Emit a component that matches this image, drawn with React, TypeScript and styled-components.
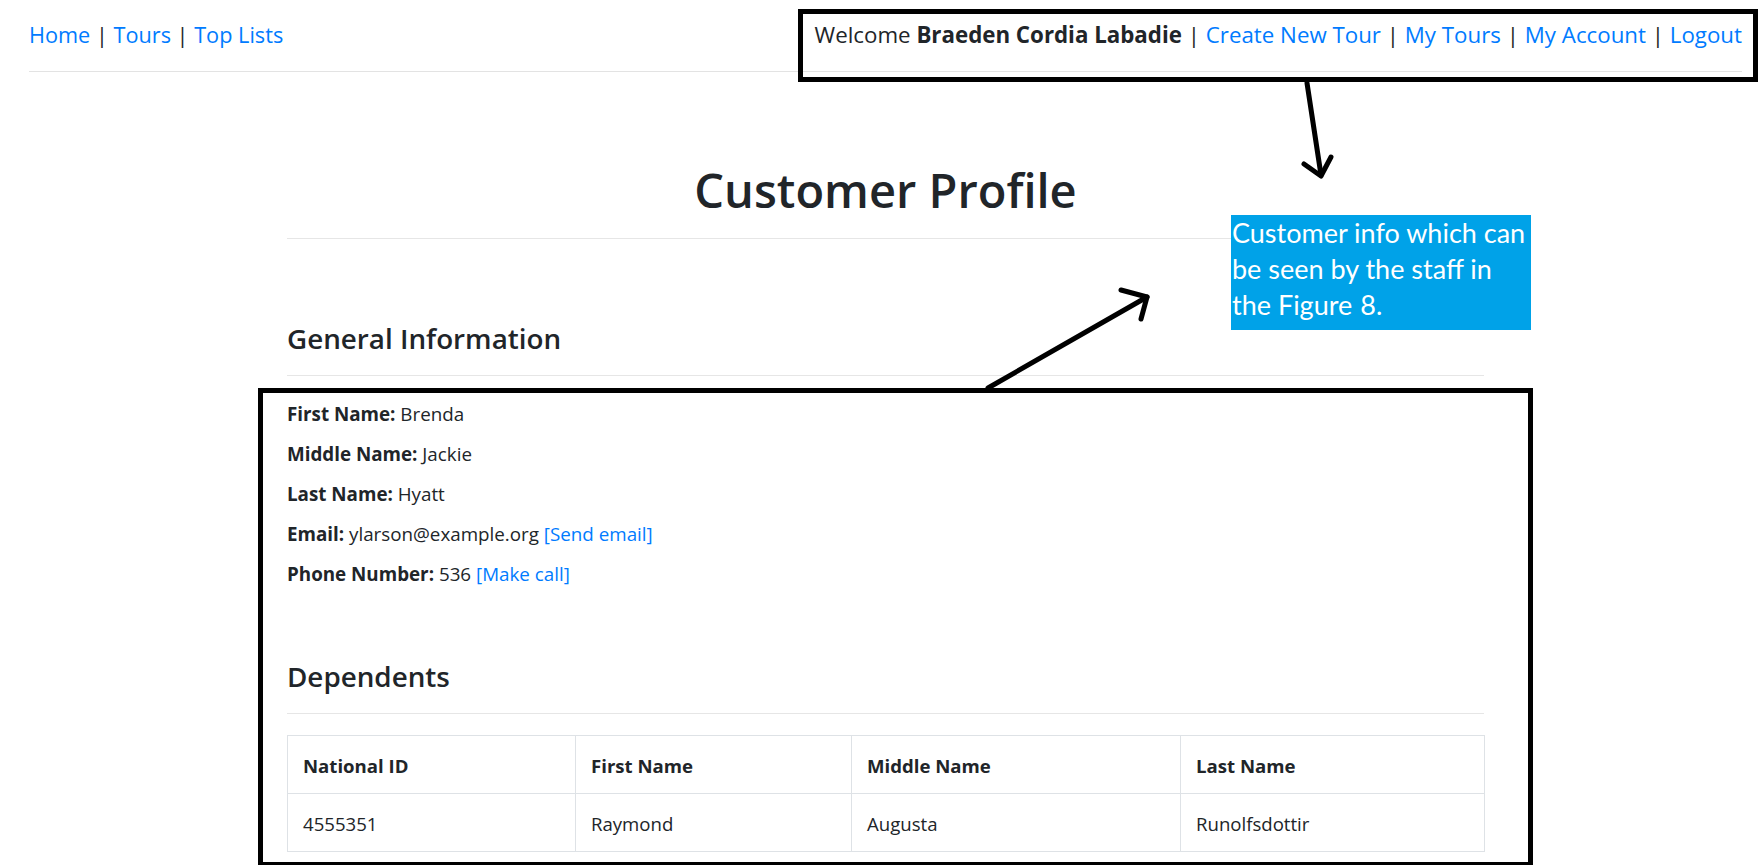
import React from "react";
import styled, { createGlobalStyle } from "styled-components";

const GlobalStyle = createGlobalStyle`
  html, body { margin: 0; padding: 0; background: #ffffff; }
  body {
    font-family: "Open Sans", "Noto Sans", sans-serif;
    color: #212529;
  }
  * { box-sizing: border-box; }
`;

const Page = styled.div`
  position: relative;
  width: 1760px;
  height: 865px;
  overflow: hidden;
`;

const Header = styled.header`
  display: flex;
  justify-content: space-between;
  align-items: center;
  margin: 0 18px 0 29px;
  padding: 17px 0 18px;
  border-bottom: 1px solid #e3e3e3;
  line-height: 36px;
  white-space: pre;
`;

const NavGroup = styled.nav<{ $size: number }>`
  display: block;
  font-size: ${(p) => p.$size}px;
`;

const NavLink = styled.a`
  color: #007bff;
  text-decoration: none;
`;

const Strong = styled.b`
  font-weight: 700;
`;

const Main = styled.main`
  width: 1197px;
  margin-left: 287px;
  padding-top: 88px;
`;

const Title = styled.h1`
  margin: 0;
  font-size: 47px;
  font-weight: 600;
  line-height: 60px;
  text-align: center;
  padding-bottom: 18px;
  border-bottom: 1px solid #e6e6e6;
`;

const SectionTitle = styled.h4<{ $gap: number }>`
  margin: ${(p) => p.$gap}px 0 0;
  font-size: 27.8px;
  font-weight: 600;
  line-height: 36px;
  padding-bottom: 19px;
  border-bottom: 1px solid #e6e6e6;
`;

const InfoList = styled.div`
  display: flex;
  flex-direction: column;
  gap: 10px;
  margin-top: 23px;
  margin-bottom: -2px;
  font-size: 18.8px;
  line-height: 30px;
`;

const InfoRow = styled.p`
  margin: 0;
  white-space: pre;
`;

const Label = styled.b`
  font-weight: 700;
`;

const ActionLink = styled.a`
  color: #007bff;
  text-decoration: none;
`;

const Table = styled.table`
  width: 1197px;
  margin-top: 21px;
  border-collapse: collapse;
  table-layout: fixed;
  font-size: 18.6px;
  line-height: 29px;
`;

const Th = styled.th`
  text-align: left;
  font-weight: 700;
  padding: 15px 15px 13px;
  border: 1px solid #dee2e6;
`;

const Td = styled.td`
  padding: 15px 15px 13px;
  border: 1px solid #dee2e6;
`;

const Overlay = styled.svg`
  position: absolute;
  left: 0;
  top: 0;
  pointer-events: none;
`;

const Callout = styled.div`
  position: absolute;
  left: 1231px;
  top: 215px;
  width: 300px;
  height: 115px;
  background: #00a2e8;
  color: #ffffff;
  font-family: "Lato", "Open Sans", sans-serif;
  font-size: 27px;
  line-height: 36px;
  padding: 0 0 0 1px;
  white-space: nowrap;
`;

const Figure = styled.span`
  margin-left: 8px;
`;

const columns = [288, 276, 329, 304];

const dependents = [
  { id: "4555351", first: "Raymond", middle: "Augusta", last: "Runolfsdottir" },
];

export default function App() {
  return (
    <Page>
      <GlobalStyle />
      <Header>
        <NavGroup $size={21.7}>
          <NavLink href="#">Home</NavLink>
          {" | "}
          <NavLink href="#">Tours</NavLink>
          {" | "}
          <NavLink href="#">Top Lists</NavLink>
        </NavGroup>
        <NavGroup $size={22.3}>
          {"Welcome "}
          <Strong>Braeden Cordia Labadie</Strong>
          {" | "}
          <NavLink href="#">Create New Tour</NavLink>
          {" | "}
          <NavLink href="#">My Tours</NavLink>
          {" | "}
          <NavLink href="#">My Account</NavLink>
          {" | "}
          <NavLink href="#">Logout</NavLink>
        </NavGroup>
      </Header>

      <Main>
        <Title>Customer Profile</Title>

        <SectionTitle $gap={81}>General Information</SectionTitle>
        <InfoList>
          <InfoRow>
            <Label>First Name:</Label> Brenda
          </InfoRow>
          <InfoRow>
            <Label>Middle Name:</Label> Jackie
          </InfoRow>
          <InfoRow>
            <Label>Last Name:</Label> Hyatt
          </InfoRow>
          <InfoRow>
            <Label>Email:</Label> ylarson@example.org{" "}
            <ActionLink href="#">[Send email]</ActionLink>
          </InfoRow>
          <InfoRow>
            <Label>Phone Number:</Label> 536{" "}
            <ActionLink href="#">[Make call]</ActionLink>
          </InfoRow>
        </InfoList>

        <SectionTitle $gap={71}>Dependents</SectionTitle>
        <Table>
          <colgroup>
            {columns.map((w, i) => (
              <col key={i} style={{ width: w }} />
            ))}
          </colgroup>
          <thead>
            <tr>
              <Th>National ID</Th>
              <Th>First Name</Th>
              <Th>Middle Name</Th>
              <Th>Last Name</Th>
            </tr>
          </thead>
          <tbody>
            {dependents.map((d) => (
              <tr key={d.id}>
                <Td>{d.id}</Td>
                <Td>{d.first}</Td>
                <Td>{d.middle}</Td>
                <Td>{d.last}</Td>
              </tr>
            ))}
          </tbody>
        </Table>
      </Main>

      <Overlay width="1760" height="865" viewBox="0 0 1760 865">
        <g fill="none" stroke="#000" strokeWidth="5">
          <rect x="800.5" y="11.5" width="955" height="68" />
          <rect x="260.5" y="390.5" width="1270" height="474" />
        </g>
        <g fill="none" stroke="#000" strokeWidth="5" strokeLinecap="round" strokeLinejoin="round">
          <path d="M1307 83 L1321 175" />
          <path d="M1304 164 L1321 176 L1331 157" />
          <path d="M988 388 L1147 297" />
          <path d="M1121 290 L1147 297 L1141 319" />
        </g>
      </Overlay>

      <Callout>
        Customer info which can
        <br />
        be seen by the staff in
        <br />
        the Figure<Figure>8.</Figure>
      </Callout>
    </Page>
  );
}
